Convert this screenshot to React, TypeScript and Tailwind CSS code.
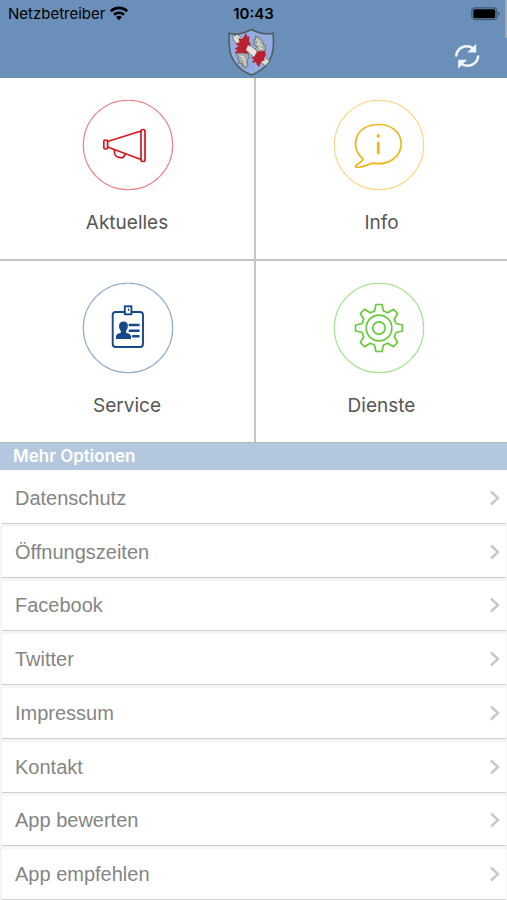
import type { ReactNode } from 'react';

const OPTIONS = [
  'Datenschutz',
  'Öffnungszeiten',
  'Facebook',
  'Twitter',
  'Impressum',
  'Kontakt',
  'App bewerten',
  'App empfehlen',
];

/* ── Icons ─────────────────────────────────────────────────────────── */

function WifiIcon() {
  return (
    <svg className="h-4 w-5" viewBox="0 0 20 16" fill="none" stroke="#000" strokeWidth={2.6} aria-hidden="true">
      <path d="M1.8 5.2a11.7 11.7 0 0 1 16.4 0" />
      <path d="M5 8.8a7.2 7.2 0 0 1 10 0" />
      <path d="M10 14.2 7.1 11.3a4.1 4.1 0 0 1 5.8 0Z" fill="#000" stroke="none" />
    </svg>
  );
}

function BatteryIcon() {
  return (
    <svg className="h-[14px] w-[30px]" viewBox="0 0 30 14" aria-hidden="true">
      <rect x="0.8" y="0.8" width="25" height="11.8" rx="3.2" fill="none" stroke="#40597a" strokeWidth="1.2" />
      <rect x="2.3" y="2.2" width="22" height="9" rx="1.5" fill="#000" />
      <path d="M27 4.6c2.2.7 2.2 3.3 0 4Z" fill="#40597a" />
    </svg>
  );
}

function CrestIcon() {
  return (
    <svg className="h-12 w-12" viewBox="0 0 48 48" aria-hidden="true">
      <path
        d="M1.2 5.2C8 7.4 15.5 5.500 23.500 1.500c8 4 14.500 5.800 21.500 3.700.6 8 1.500 14-1.200 22C40.500 36.500 33 43.500 23.500 47 14 43.500 6.500 36.500 3 27.200.4 19.200 1 13 1.200 5.200Z"
        fill="#94acdf"
        stroke="#4c5e5c"
        strokeWidth="1.600"
      />
      <path d="m4.500 8.500 5-2L41.500 33l-4 5L6 13Z" fill="#dcdcd6" stroke="#5d625e" strokeWidth=".7" />
      {/* Left beast, red above and pale below */}
      <path d="m18 5 1.500 4 2-1-.5 5 1.500 3-1 6 1 2-5 2-5-1-6 0 3-3-3-1 4-3-3-2 4-2-1-4 4 1Z" fill="#bb2032" />
      <path d="m7.500 25.500 7-.5 6 1 .5 4-2 2 1 5-2 3-4-2 1-2-5-1 2-2-3-2 2-1Z" fill="#a9ada8" stroke="#5f635f" strokeWidth=".7" />
      <path d="m12 28 4 1-2 2 4 1-2 2 2 3" fill="none" stroke="#e6e6e0" strokeWidth="1" />
      {/* Right beast, pale above and red below */}
      <path d="m27 8 4 1 4 4 0 3 3 2-1 5-7 1-3-3 2-2-4-3 2-2-2-2 3-1Z" fill="#a9ada8" stroke="#5f635f" strokeWidth=".7" />
      <path d="m28 11 4 3-3 2 5 1-3 3 4 1" fill="none" stroke="#e6e6e0" strokeWidth="1" />
      <path d="m27 23.500 10-.5 1 4-2 3 1 2-4 2-2 5-2-2-1-3-4 1 2-4-3-1 4-2Z" fill="#bb2032" />
      {/* Sash passes over both beasts in the middle */}
      <path d="m20 17 9 7-3 4.500-8-6.500Z" fill="#e4e4df" />
    </svg>
  );
}

function RefreshIcon() {
  return (
    <svg className="h-[26px] w-[26px]" viewBox="0 0 26 26" fill="none" stroke="#f0f5fb" strokeWidth="2.500" aria-hidden="true">
      <path d="M2.200 13.500C2.600 4.500 12 .5 19.500 5.500" />
      <path d="M24.200 12.500C23.800 21.500 14 25.500 6.500 20.500" />
      <path d="M22.200.7v8.800h-9Z" fill="#f0f5fb" stroke="none" />
      <path d="M4.200 25.800v-9h9Z" fill="#f0f5fb" stroke="none" />
    </svg>
  );
}

function ChevronIcon() {
  return (
    <svg className="h-4 w-3" viewBox="0 0 12 16" fill="none" stroke="#c7c7cc" strokeWidth="2.400" aria-hidden="true">
      <path d="m2 1.500 7 6.500-7 6.500" />
    </svg>
  );
}

interface TileIconProps {
  ring: string;
  color: string;
  children: ReactNode;
}

/* Circle outline shared by all four tiles */
function TileIcon({ ring, color, children }: TileIconProps) {
  return (
    <svg className="size-[92px]" viewBox="-1 -1 92 92" fill="none" stroke={color} strokeWidth="1.700" strokeLinejoin="round" strokeLinecap="round" aria-hidden="true">
      <circle cx="45" cy="45" r="44.700" stroke={ring} strokeWidth="1.100" />
      {children}
    </svg>
  );
}

function MegaphoneIcon() {
  return (
    <TileIcon ring="#ec7f86" color="#d7161c">
      <rect x="20.800" y="40" width="3.800" height="9" rx="1.500" />
      <rect x="58" y="29.500" width="4" height="32" rx="1.800" />
      <path d="M24.600 41.500 58 31M24.600 47 58 59.500" />
      <path d="M31.700 50c-1 3 .4 5.800 2.500 6.700l3 .9c2.500.6 4.300-1.200 4.900-3.600" />
    </TileIcon>
  );
}

function InfoIcon() {
  return (
    <TileIcon ring="#fbd783" color="#f2b51c">
      <path d="M29.200 58.800C15 48 20.500 24.500 44.500 24.500c13.500 0 22.700 8.500 22.700 19.300 0 13.200-13.200 22-28.200 19.400-4.500.3-8.500 4.800-16.200 4-2-.2-1.500-1.400-.3-2.200 3.200-2 5.500-3.500 6.700-6.200Z" />
      <circle cx="44.300" cy="36" r="1.800" fill="#f2b51c" stroke="none" />
      <path d="M44.300 43v10" strokeWidth="2.800" />
    </TileIcon>
  );
}

function BadgeIcon() {
  return (
    <TileIcon ring="#8fa9cc" color="#17498a">
      <rect x="29.700" y="29" width="30.300" height="35" rx="3" strokeWidth="1.900" />
      <rect x="41.800" y="23.300" width="6.600" height="8" fill="#fff" strokeLinejoin="miter" strokeWidth="1.900" />
      <path d="M45.500 26v1.500" strokeWidth="1.200" />
      <path d="M40.500 38.500c3.300 0 4.800 2.400 4.300 5.200-.2 2-1 3.200-1.800 4.300v1.600c1.500 1 5 1.200 5 4.200V56H33v-2.200c0-3 3.500-3.200 5-4.200V48c-1-1-1.700-2.300-1.900-4.300-.4-2.800 1.100-5.200 4.400-5.200Z" fill="#17498a" stroke="none" />
      <path d="M46.800 42h8.700M46.800 47.700h8.700M50 53.300h5.500" strokeWidth="2.500" />
    </TileIcon>
  );
}

function GearIcon() {
  return (
    <TileIcon ring="#a5e08c" color="#66cb3c">
      <path
        transform="translate(45 45)"
        d="M-4.500-17-3-23.500H3L4.500-17 8.800-15.200 14.500-18.700 18.700-14.500 15.200-8.800 17-4.500 23.500-3V3L17 4.500 15.200 8.800 18.700 14.500 14.500 18.700 8.800 15.200 4.500 17 3 23.500H-3L-4.500 17-8.800 15.200-14.500 18.700-18.700 14.500-15.200 8.800-17 4.500-23.500 3V-3L-17-4.500-15.200-8.800-18.700-14.500-14.500-18.700-8.800-15.200Z"
      />
      <circle cx="45" cy="45" r="12.800" />
      <circle cx="45" cy="45" r="6.200" />
    </TileIcon>
  );
}

/* ── Sections ──────────────────────────────────────────────────────── */

function Header() {
  return (
    <header className="relative bg-[#6a8fb9] pb-[2px]">
      <div className="grid h-7 grid-cols-3 items-center text-[15px] text-black">
        <div className="flex items-center gap-1 pl-2">
          Netzbetreiber
          <WifiIcon />
        </div>
        <div className="text-center font-semibold">10:43</div>
        <div className="flex justify-end pr-[6px]">
          <BatteryIcon />
        </div>
      </div>
      <div className="grid h-12 grid-cols-3 items-center">
        <div className="col-start-2 flex justify-center pr-1">
          <CrestIcon />
        </div>
        <button type="button" aria-label="Aktualisieren" className="mr-[27px] justify-self-end pt-2">
          <RefreshIcon />
        </button>
      </div>
      {/* Scroll indicator */}
      <div aria-hidden="true" className="absolute top-0 right-0 h-[38px] w-[2px] bg-[#aaaaaa]" />
    </header>
  );
}

interface TileProps {
  label: string;
  icon: ReactNode;
}

function Tile({ label, icon }: TileProps) {
  return (
    <a href="#" className="group flex flex-col items-center gap-[18px] bg-white pt-[21px] pb-[22px] text-[19px] leading-7 text-[#565656]">
      <span className="group-odd:pl-[2px] group-even:pr-[6px]">{icon}</span>
      {label}
    </a>
  );
}

export default function App() {
  return (
    <div className="flex min-h-screen flex-col bg-white font-[Inter,sans-serif]">
      <Header />

      <nav aria-label="Hauptmenü" className="grid grid-cols-[254fr_251fr] gap-[2px] bg-[#c6c6c6]">
        <Tile label="Aktuelles" icon={<MegaphoneIcon />} />
        <Tile label="Info" icon={<InfoIcon />} />
        <Tile label="Service" icon={<BadgeIcon />} />
        <Tile label="Dienste" icon={<GearIcon />} />
      </nav>

      <h2 className="border-t border-[#b3b8bf] bg-[#b3c7de] pl-[13px] text-[17px] leading-[27px] font-semibold text-white">
        Mehr Optionen
      </h2>

      <ul className="grid flex-1 auto-rows-fr font-['Liberation_Sans',sans-serif] text-xl text-[#858585]">
        {OPTIONS.map((option) => (
          <li key={option} className="flex bg-[#f5f5f5] pt-[3px] pr-px pl-[2px] first:bg-white">
            <a href="#" className="flex flex-1 items-center justify-between border-b border-[#cfcfcf] bg-white py-2 pr-[5px] pl-[13px]">
              {option}
              <ChevronIcon />
            </a>
          </li>
        ))}
      </ul>
    </div>
  );
}
